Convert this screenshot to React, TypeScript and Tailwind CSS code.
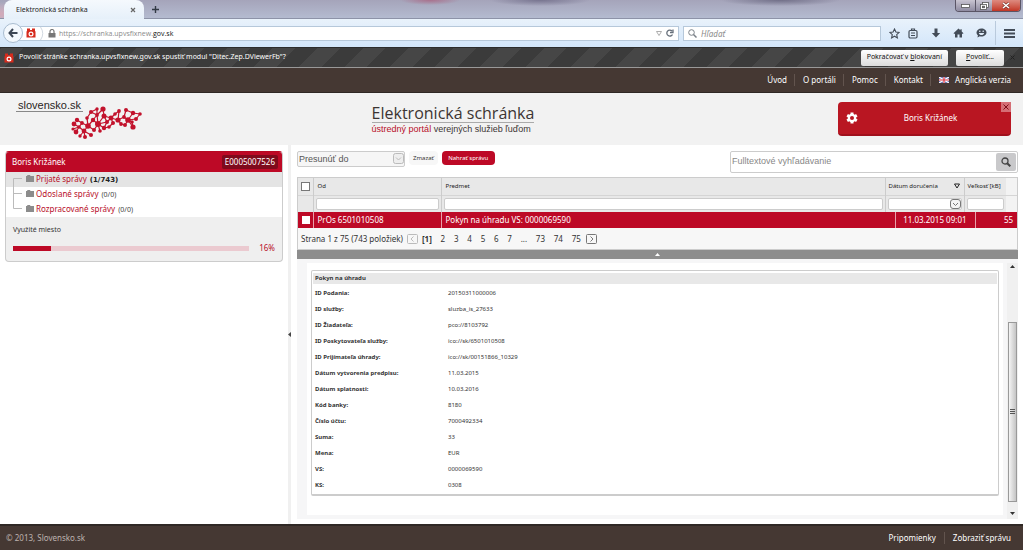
import React from 'react';

const NAV_LINKS = ['Úvod', 'O portáli', 'Pomoc', 'Kontakt'];

const FOLDERS = [
  { name: 'Prijaté správy', count: '(1/743)', active: true },
  { name: 'Odoslané správy', count: '(0/0)', active: false },
  { name: 'Rozpracované správy', count: '(0/0)', active: false },
];

const DETAILS = [
  ['ID Podania:', '20150311000006'],
  ['ID služby:', 'sluzba_is_27633'],
  ['ID Žiadateľa:', 'pco://8103792'],
  ['ID Poskytovateľa služby:', 'ico://sk/6501010508'],
  ['ID Prijímateľa úhrady:', 'ico://sk/00151866_10329'],
  ['Dátum vytvorenia predpisu:', '11.03.2015'],
  ['Dátum splatnosti:', '10.03.2016'],
  ['Kód banky:', '8180'],
  ['Číslo účtu:', '7000492334'],
  ['Suma:', '33'],
  ['Mena:', 'EUR'],
  ['VS:', '0000069590'],
  ['KS:', '0308'],
];

// [x, y, radius] of the dots in the logo map
const DOTS = [
  [3, 18, 2.4], [5, 26, 2.4], [8, 21, 1.8], [2, 23, 1.6], [13, 25, 2.4], [14, 31, 2], [20, 29, 2], [6, 14, 2.2], [11, 17, 1.9],
  [17, 20, 2.8], [23, 24, 2], [16, 12, 1.8], [20, 6, 2], [22, 14, 2.2], [27, 18, 3], [26, 9, 1.9], [32, 3, 2.6],
  [33, 10, 2.5], [36, 16, 2], [33, 22, 2.2], [29, 25, 1.8], [38, 21, 1.8], [40, 12, 2.4], [44, 8, 1.8], [42, 17, 2],
  [47, 14, 2.6], [50, 18, 1.9], [53, 11, 1.9], [48, 5, 1.9], [55, 4, 2], [57, 14, 2.8], [62, 7, 2.2], [62, 21, 2.6],
  [65, 13, 2], [69, 8, 1.8], [61, 16, 1.8], [54, 19, 2], [26, 3, 1.7], [9, 30, 1.7],
];

const EDGES = [
  [0, 2], [1, 2], [3, 2], [2, 4], [4, 5], [4, 6], [7, 8], [8, 9], [2, 8], [4, 9], [9, 10], [9, 11], [9, 13], [11, 12], [12, 15],
  [13, 14], [13, 15], [14, 15], [14, 17], [14, 19], [14, 18], [14, 20], [10, 14], [15, 16], [16, 17], [17, 18], [18, 19], [18, 22],
  [19, 21], [17, 22], [22, 23], [22, 24], [22, 25], [24, 21], [25, 26], [25, 27], [25, 28], [27, 29], [27, 30], [30, 31], [30, 32],
  [30, 33], [33, 34], [31, 34], [30, 35], [35, 32], [26, 36], [30, 36], [15, 37], [12, 37], [4, 38], [31, 29], [23, 28],
];

const SlovakiaLogo = () => (
  <svg viewBox="0 0 72 33" className="h-[33px] w-[72px]" aria-hidden="true">
    <g stroke="#c2122c" strokeWidth="1.2">
      {EDGES.map(([a, b]) => (
        <line key={`${a}-${b}`} x1={DOTS[a][0]} y1={DOTS[a][1]} x2={DOTS[b][0]} y2={DOTS[b][1]} />
      ))}
    </g>
    <g fill="#c2122c">
      {DOTS.map(([x, y, r]) => (
        <circle key={`${x}-${y}`} cx={x} cy={y} r={r} />
      ))}
    </g>
  </svg>
);

const BlockIcon = ({ className = '' }: { className?: string }) => (
  <svg viewBox="0 0 10 10" className={className} aria-hidden="true">
    <path d="M1 .5h3v1.500h2V.5h3v2.700h.5V9.500H.5V3.200H1z" fill="#d62b1d" />
    <circle cx="5" cy="6" r="2.500" fill="#fff" />
    <circle cx="5" cy="6" r="1.300" fill="#d62b1d" />
  </svg>
);

const BrowserTabs = () => (
  <div className="flex h-[19px] items-stretch justify-between border-b border-[#8d93a8] bg-[radial-gradient(30px_5px_at_430px_0px,#a9708c,transparent),radial-gradient(50px_6px_at_540px_0px,#77748f,transparent),radial-gradient(60px_6px_at_780px_0px,#716f88,transparent),radial-gradient(30px_12px_at_0px_14px,#d3a9b8,transparent),linear-gradient(#a5a4ba,#b4bbd0)]">
    <div className="flex items-stretch">
      <div className="-mb-px ml-1 flex w-[140px] items-center justify-between rounded-t-lg bg-linear-to-b from-[#f5f9fd] to-[#e6f0fa] pr-2 pl-3 text-[7px] leading-none text-[#1d1d1d]">
        <span>Elektronická schránka</span>
        <button aria-label="Zavrieť kartu">
          <svg viewBox="0 0 6 6" className="size-[6px]" stroke="#666" strokeWidth="1.2">
            <path d="M1 1l4 4M5 1L1 5" />
          </svg>
        </button>
      </div>
      <button aria-label="Nová karta" className="ml-2">
        <svg viewBox="0 0 7 7" className="size-[7px]" stroke="#333a45" strokeWidth="1.4">
          <path d="M3.500 0v7M0 3.500h7" />
        </svg>
      </button>
    </div>
    <div className="mr-0.5 flex h-3 overflow-hidden rounded-b border border-t-0 border-[#5a5566]">
      <button aria-label="Minimalizovať" className="flex w-5 items-center justify-center border-r border-[#5a5566] bg-linear-to-b from-[#c9c5d2] to-[#8f8ba1]">
        <svg viewBox="0 0 9 4" className="h-1 w-[9px]">
          <rect x="0.500" y="0.500" width="8" height="3" fill="#fff" stroke="#555" strokeWidth="0.8" />
        </svg>
      </button>
      <button aria-label="Obnoviť" className="flex w-4 items-center justify-center bg-linear-to-b from-[#c9c5d2] to-[#8f8ba1]">
        <svg viewBox="0 0 9 8" className="h-2 w-[9px]" fill="#fff" stroke="#555" strokeWidth="0.800">
          <rect x="2.500" y="0.500" width="6" height="5" />
          <rect x="0.500" y="2.500" width="6" height="5" />
          <rect x="2.500" y="4.200" width="2" height="1.500" fill="#777" />
        </svg>
      </button>
      <button aria-label="Zavrieť" className="flex w-7 items-center justify-center bg-linear-to-b from-[#dd8a80] to-[#c23424]">
        <svg viewBox="0 0 8 7" className="h-[7px] w-2">
          <path d="M1 1l6 5M7 1L1 6" stroke="#6b2a24" strokeWidth="2.600" />
          <path d="M1 1l6 5M7 1L1 6" stroke="#fff" strokeWidth="1.600" />
        </svg>
      </button>
    </div>
  </div>
);

const BrowserToolbar = () => (
  <div className="flex h-7 items-center bg-linear-to-b from-[#e9f2fb] to-[#d3e6fa] pl-[3px]">
    <button aria-label="Späť" className="z-10 flex size-5 items-center justify-center rounded-full border border-[#a9bccf] bg-[#f3f8fd]">
      <svg viewBox="0 0 10 10" className="size-[10px]" fill="none" stroke="#3c4654" strokeWidth="2">
        <path d="M5 1L1.500 5L5 9M1.500 5H9.500" />
      </svg>
    </button>
    <div className="-ml-1 flex h-[15px] grow items-center border border-[#b6c8da] bg-white pl-1.5">
      <BlockIcon className="size-[10px]" />
      <svg viewBox="0 0 4 13" className="ml-1 h-[13px] w-1" fill="none" stroke="#c5ced8" strokeWidth="0.800">
        <path d="M.5 0Q5 6.500 .5 13" />
      </svg>
      <svg viewBox="0 0 8 9" className="ml-1 h-[9px] w-2" aria-hidden="true">
        <rect x="0.500" y="4" width="7" height="4.500" fill="#777" />
        <path d="M2 4V2.500a2 2 0 0 1 4 0V4" fill="none" stroke="#777" strokeWidth="1.200" />
      </svg>
      <span className="ml-[3px] grow font-['Open_Sans',sans-serif] text-[7px] leading-none text-[#8b8b8b]">
        https://schranka.upvsfixnew.<span className="text-[#111]">gov.sk</span>
      </span>
      <svg viewBox="0 0 6 5" className="h-[5px] w-[6px]" fill="none" stroke="#999" strokeWidth="0.800">
        <path d="M.5.500h5L3 4.500z" />
      </svg>
      <button aria-label="Obnoviť stránku" className="mr-1 ml-1">
        <svg viewBox="0 0 8 8" className="size-2" fill="none" stroke="#666f7a" strokeWidth="1.300">
          <path d="M6.500 5.500A3 3 0 1 1 6 2M7 .5V3.500H4" />
        </svg>
      </button>
    </div>
    <label className="ml-1 flex h-[15px] w-[198px] items-center gap-1 border border-[#b6c8da] bg-white px-1">
      <svg viewBox="0 0 9 9" className="size-[9px] shrink-0" fill="none" stroke="#7a8087" strokeWidth="1">
        <circle cx="3.500" cy="3.500" r="2.800" />
        <path d="M5.500 5.500L8.500 8.500" strokeWidth="1.500" />
      </svg>
      <input aria-label="Hľadať" placeholder="Hľadať" className="w-full text-[8px] leading-none italic outline-none placeholder:text-[#8a8a8a]" />
    </label>
    <div className="ml-2 flex items-center gap-3 pr-2 text-[#434c58]">
      <svg viewBox="0 0 11 11" className="size-[11px]" fill="none" stroke="currentColor" strokeWidth="1.100">
        <path d="M5.500 1l1.400 3 3.200.4-2.400 2.200.7 3.300-2.900-1.700-2.900 1.700.7-3.300L.9 4.400 4.100 4z" />
      </svg>
      <svg viewBox="0 0 10 11" className="-ml-1 h-[11px] w-[10px]" fill="none" stroke="currentColor" strokeWidth="1.200">
        <rect x="1" y="2.500" width="8" height="7.500" rx="1.200" />
        <path d="M3.500 2.500V1h3v1.500M3 5h4M3 7.500h4" />
      </svg>
      <svg viewBox="0 0 10 10" className="ml-px size-[10px]" fill="currentColor">
        <path d="M3.500.500h3V5H9.200L5 9.500.8 5h2.700z" />
      </svg>
      <svg viewBox="0 0 11 10" className="h-[10px] w-[11px]" fill="currentColor">
        <path d="M5.500.500L.5 5.200l.8.800.7-.6v4.100h2.500V6.500h2v3H9V5.400l.7.600.8-.8L8.700 3.500V1.300H7.400v1z" />
      </svg>
      <svg viewBox="0 0 11 10" className="h-[10px] w-[11px]">
        <path d="M5.500.500c2.800 0 5 1.700 5 4s-2.200 4-5 4c-.6 0-1.200-.1-1.700-.2L1.500 9.500l.4-2.200C1 6.600.5 5.600.5 4.500c0-2.300 2.200-4 5-4z" fill="currentColor" />
        <circle cx="3.800" cy="3.300" r=".8" fill="#dfecf9" />
        <circle cx="7.200" cy="3.300" r=".8" fill="#dfecf9" />
        <path d="M2.800 5h5.400C7.800 6.500 6.800 7 5.500 7S3.200 6.500 2.800 5z" fill="#dfecf9" />
      </svg>
      <button aria-label="Ponuka" className="-ml-1 flex h-6 items-center border-l border-[#b9cadc] pl-2">
        <svg viewBox="0 0 11 9" className="h-[9px] w-[11px]" fill="currentColor">
          <path d="M0 0h11v2H0zM0 3.500h11v2H0zM0 7h11v2H0z" />
        </svg>
      </button>
    </div>
  </div>
);

const PluginNotice = () => (
  <div className="flex h-[21px] items-center border-y border-[#2c2c2c] border-b-[#999] bg-[repeating-linear-gradient(-45deg,#3b3b3b_0px,#3b3b3b_16px,#464646_16px,#464646_32px)] pl-1 text-[7px] text-white">
    <BlockIcon className="size-[10px]" />
    <span className="ml-[5px] grow">Povoliť stránke schranka.upvsfixnew.gov.sk spustiť modul "Ditec.Zep.DViewerFb"?</span>
    <button className="h-4 rounded-xs bg-linear-to-b from-white to-[#dcdcdc] px-1.5 text-[#111]">
      Pokračovať v <u>b</u>lokovaní
    </button>
    <button className="ml-2 h-4 w-12 rounded-xs bg-linear-to-b from-white to-[#dcdcdc] text-[#111]">
      <u>P</u>ovoliť...
    </button>
    <button aria-label="Zavrieť upozornenie" className="mr-2 ml-1.5">
      <svg viewBox="0 0 5 5" className="size-[5px]" stroke="#222">
        <path d="M.5.500l4 4M4.500.500l-4 4" />
      </svg>
    </button>
  </div>
);

const PortalHeader = () => (
  <header>
    <nav className="flex h-[25px] items-center justify-end border-b border-[#2f2825] bg-[#453833] pr-3 text-[8px] text-white">
      {NAV_LINKS.map((link) => (
        <a key={link} href="#" className="border-r border-[#62544e] pr-[7px] pl-2 leading-3">
          {link}
        </a>
      ))}
      <a href="#" className="flex items-center gap-1.5 pl-2 leading-3">
        <svg viewBox="0 0 10 6" className="h-[6px] w-[10px]" aria-hidden="true">
          <rect width="10" height="6" fill="#5a6fb5" />
          <path d="M0 0l10 6M10 0L0 6" stroke="#fff" strokeWidth="1.200" />
          <path d="M5 0v6M0 3h10" stroke="#fff" strokeWidth="2.200" />
          <path d="M5 0v6M0 3h10" stroke="#d5303e" strokeWidth="1.200" />
        </svg>
        Anglická verzia
      </a>
    </nav>
    <div className="grid h-[52px] grid-cols-[1fr_auto_1fr] bg-[#f2f2f2]">
      <a href="#" className="flex pt-[7px] pl-4 font-['Liberation_Sans',sans-serif]">
        <span className="h-3 border-b border-[#888] px-0.5 text-[11px] leading-[11px] text-[#2b2624]">slovensko.sk</span>
        <span className="-ml-3 pt-1.5">
          <SlovakiaLogo />
        </span>
      </a>
      <div className="-ml-[117px] pt-[11px]">
        <h1 className="border-b border-[#aaa] font-['Open_Sans',sans-serif] text-[16px] leading-[18px] text-[#3c3532]">Elektronická schránka</h1>
        <p className="mt-px font-['Liberation_Sans',sans-serif] text-[9px] leading-[10px] text-[#3c3532]">
          <span className="text-[#b80e29]">ústredný portál</span> verejných služieb ľuďom
        </p>
      </div>
      <div className="flex justify-end pt-[9px] pr-3">
        <div className="relative flex h-[34px] w-[173px] items-center rounded border-b-2 border-[#a0101c] bg-[#b91622] text-[8px] text-white">
          <svg viewBox="0 0 12 12" className="ml-2 size-3" aria-hidden="true">
            <g stroke="#fff" strokeWidth="3">
              <path d="M6 .5v11M1.200 3.300l9.600 5.400M1.200 8.700l9.600-5.400" />
            </g>
            <circle cx="6" cy="6" r="4.300" fill="#fff" />
            <circle cx="6" cy="6" r="2" fill="#b91622" />
          </svg>
          <span className="grow pr-2 text-center">Boris Križánek</span>
          <button aria-label="Odhlásiť" className="absolute top-0 right-0 flex size-[10px] items-center justify-center bg-[#d56e75]">
            <svg viewBox="0 0 6 6" className="size-[6px]" stroke="#7c0d17" strokeWidth="1">
              <path d="M.5.500l5 5M5.500.500l-5 5" />
            </svg>
          </button>
        </div>
      </div>
    </div>
  </header>
);

const Sidebar = () => (
  <aside className="w-[288px] shrink-0 bg-white py-[6px] pr-[5px] pl-[5px]">
    <div className="overflow-hidden rounded border border-[#ccc] border-t-[#b80822] bg-[#efefef]">
      <div className="-mx-px flex h-5 items-center justify-between bg-[#bd0926] pr-[5px] pl-[7px] text-[8px] text-white">
        <span>Boris Križánek</span>
        <span className="rounded-xs bg-[#7f0a1c] px-[3px] leading-[14px]">E0005007526</span>
      </div>
      <ul className="bg-white text-[8px]">
        {FOLDERS.map((folder, i) => (
          <li key={folder.name} className={`flex h-[15px] items-center pl-[7px] ${folder.active ? 'bg-[#e4e4e4]' : ''}`}>
            <svg viewBox="0 0 9 15" className="h-[15px] w-[9px]" fill="none" stroke="#bbb">
              {i === 0 && <path d="M9 6.500H.5V15" />}
              {i === 1 && <path d="M.5 0v15M.5 6.500H9" />}
              {i === 2 && <path d="M.5 0v6.500H9" />}
            </svg>
            <svg viewBox="0 0 8 7" className="mr-0.5 mb-0.5 ml-1 h-[7px] w-2" fill="#8c8c8c">
              <path d="M0 1h1l.5-1H4l.5 1H8v6H0z" />
            </svg>
            <span className="flex items-baseline gap-[3px]">
              <a href="#" className="text-[#b80e29]">
                {folder.name}
              </a>
              <span className={folder.active ? "font-['DejaVu_Sans',sans-serif] text-[7px] font-bold text-[#222]" : 'text-[7px] text-[#444]'}>
                {folder.count}
              </span>
            </span>
          </li>
        ))}
      </ul>
      <div className="h-[44px] px-[7px] pt-[7px] text-[7px] leading-3 text-[#333]">
        <div>Využité miesto</div>
        <div className="mt-1.5 flex items-center text-[8px]">
          <div className="h-[5px] grow bg-[#ebcad0]">
            <div className="h-full bg-[#bd0926]" style={{ width: '16%' }} />
          </div>
          <span className="w-[26px] text-right text-[#b80e29]">16%</span>
        </div>
      </div>
    </div>
  </aside>
);

const Toolbar = () => (
  <div className="flex h-8 items-start pt-[6px] font-['Liberation_Sans',sans-serif]">
    <div className="relative">
      <select aria-label="Presunúť do" className="block h-4 w-[108px] appearance-none rounded-xs border border-[#ccc] bg-[#f6f6f6] pl-px text-[9px] leading-3 text-[#555]">
        <option>Presunúť do</option>
      </select>
      <svg viewBox="0 0 11 11" className="pointer-events-none absolute top-[2px] right-px size-[11px]" fill="none" stroke="#bbb">
        <rect x="0.500" y="0.500" width="10" height="10" rx="2" fill="#eee" />
        <path d="M3 4.500L5.500 7L8 4.500" />
      </svg>
    </div>
    <button className="ml-1 h-[14px] rounded bg-[#f7f7f7] px-1 font-['Noto_Sans',sans-serif] text-[6px] text-[#333]">Zmazať</button>
    <button className="ml-1 h-[14px] w-[53px] rounded bg-[#bd0926] font-['Noto_Sans',sans-serif] text-[6px] text-white">Nahrať správu</button>
    <label className="ml-auto flex h-[22px] w-[288px] items-center rounded-xs border border-[#ccc] bg-white pr-px">
      <input aria-label="Fulltextové vyhľadávanie" placeholder="Fulltextové vyhľadávanie" className="grow pl-px text-[9px] outline-none placeholder:text-[#888]" />
      <button aria-label="Hľadať" className="flex h-[18px] w-5 items-center justify-center rounded-xs bg-[#c9c9cb]">
        <svg viewBox="0 0 10 10" className="size-[10px]" fill="none" stroke="#444">
          <circle cx="4" cy="4" r="3" strokeWidth="1.300" />
          <path d="M6.200 6.200L9.300 9.300" strokeWidth="2" />
        </svg>
      </button>
    </label>
  </div>
);

const MessageTable = () => (
  <div className="border border-[#ccc] bg-[#f7f7f7]">
    <table className="w-full table-fixed border-collapse text-left">
      <colgroup>
        <col className="w-[15px]" />
        <col className="w-[128px]" />
        <col />
        <col className="w-[79px]" />
        <col className="w-[42px]" />
        <col className="w-[11px]" />
      </colgroup>
      <thead className="bg-[#e8e8e8] text-[6px] text-[#222]">
        <tr className="h-[17px]">
          <th className="border-r border-[#ccc] px-[3px]">
            <input type="checkbox" aria-label="Vybrať všetko" className="block size-[9px] appearance-none border border-[#777] bg-white" />
          </th>
          <th className="border-r border-[#ccc] pl-1 font-normal">Od</th>
          <th className="border-r border-[#ccc] pl-1 font-normal">Predmet</th>
          <th className="border-r border-[#ccc] pl-[3px] font-normal">
            <span className="flex items-center justify-between pr-1">
              Dátum doručenia
              <svg viewBox="0 0 6 6" className="size-[6px]" fill="none" stroke="#222">
                <path d="M.5 1h5L3 5z" />
              </svg>
            </span>
          </th>
          <th className="pl-[3px] font-normal whitespace-nowrap">Veľkosť [kB]</th>
          <th className="bg-[#f3f3f3]" />
        </tr>
        <tr className="h-[17px] border-t border-[#d5d5d5]">
          <td className="border-r border-[#ccc]" />
          <td className="border-r border-[#ccc] px-0.5">
            <input aria-label="Filter Od" className="block h-3 w-full rounded-xs border border-[#ccc] bg-white" />
          </td>
          <td className="border-r border-[#ccc] px-0.5">
            <input aria-label="Filter Predmet" className="block h-3 w-full rounded-xs border border-[#ccc] bg-white" />
          </td>
          <td className="border-r border-[#ccc] px-0.5">
            <span className="flex h-3 items-center rounded-xs border border-[#ccc] bg-white">
              <input aria-label="Filter Dátum doručenia" className="w-0 grow" />
              <button aria-label="Vybrať dátum">
                <svg viewBox="0 0 11 10" className="block h-[10px] w-[11px]" fill="none" stroke="#777">
                  <rect x="0.500" y="0.500" width="10" height="9" rx="2.500" fill="#f4f4f4" />
                  <path d="M3 4L5.500 6.500L8 4" />
                </svg>
              </button>
            </span>
          </td>
          <td className="px-0.5">
            <input aria-label="Filter Veľkosť" className="block h-3 w-full rounded-xs border border-[#ccc] bg-white" />
          </td>
          <td className="bg-[#f3f3f3]" />
        </tr>
      </thead>
    </table>
    <table className="w-full table-fixed border-collapse text-left">
      <colgroup>
        <col className="w-[15px]" />
        <col className="w-[128px]" />
        <col />
        <col className="w-[80px]" />
        <col className="w-[42px]" />
      </colgroup>
      <tbody className="bg-[#bd0926] text-[8px] text-white">
        <tr className="h-4">
          <td className="border-r border-[#e8a0ab] px-1">
            <input type="checkbox" aria-label="Vybrať správu" className="block size-2 appearance-none bg-white" />
          </td>
          <td className="border-r border-[#e8a0ab] pl-1">PrOs 6501010508</td>
          <td className="border-r border-[#e8a0ab] pl-1">Pokyn na úhradu VS: 0000069590</td>
          <td className="border-r border-[#e8a0ab] pr-2 text-right">11.03.2015 09:01</td>
          <td className="pr-1 text-right">55</td>
        </tr>
      </tbody>
    </table>
    <div className="flex h-[21px] items-center pl-[3px] text-[8px] text-[#333]">
      <span>Strana 1 z 75 (743 položiek)</span>
      <button aria-label="Predchádzajúca strana" className="ml-1">
        <svg viewBox="0 0 11 10" className="block h-[10px] w-[11px]" fill="none" stroke="#bbb">
          <rect x="0.500" y="0.500" width="10" height="9" rx="1" />
          <path d="M6.500 2.500L4 5L6.500 7.500" />
        </svg>
      </button>
      <div className="flex w-[168px] items-center justify-between pr-[5px] pl-1">
        <span className="font-bold">[1]</span>
        {['2', '3', '4', '5', '6', '7', '…', '73', '74', '75'].map((page) =>
          page === '…' ? <span key={page}>...</span> : <a key={page} href="#">{page}</a>
        )}
      </div>
      <button aria-label="Nasledujúca strana">
        <svg viewBox="0 0 11 10" className="block h-[10px] w-[11px]" fill="none" stroke="#777">
          <rect x="0.500" y="0.500" width="10" height="9" rx="1" />
          <path d="M4.500 2.500L7 5L4.500 7.500" />
        </svg>
      </button>
    </div>
  </div>
);

const MessageDetail = () => (
  <div className="flex grow bg-[#f6f6f7] pt-1">
    <div className="mb-1 ml-[10px] grow bg-white px-1 pt-[7px]">
      <section className="rounded-xs border border-b-2 border-[#ccc] px-px pt-0.5 pb-px text-[6px] text-[#333]">
        <h2 className="mb-px h-[11px] bg-[#e8e8e8] pl-0.5 leading-[11px] font-bold">Pokyn na úhradu</h2>
        <dl>
          {DETAILS.map(([label, value]) => (
            <div key={label} className="flex h-4 items-center pl-0.5">
              <dt className="w-[133px] font-bold">{label}</dt>
              <dd>{value}</dd>
            </div>
          ))}
        </dl>
      </section>
    </div>
    <div className="ml-1 flex w-[11px] flex-col items-center bg-[#f0f0f0]">
      <svg viewBox="0 0 5 3" className="my-0.5 h-[3px] w-[5px]" fill="#333">
        <path d="M2.500 0L5 3H0z" />
      </svg>
      <div className="mt-auto mb-[10px] flex h-[180px] w-[9px] items-center justify-center border border-[#999] bg-linear-to-r from-[#f4f4f4] to-[#c4c4c4]">
        <svg viewBox="0 0 5 6" className="h-[6px] w-[5px]" stroke="#555">
          <path d="M0 .5h5M0 2.500h5M0 4.500h5" />
        </svg>
      </div>
      <svg viewBox="0 0 5 3" className="mb-1 h-[3px] w-[5px]" fill="#333">
        <path d="M0 0h5L2.500 3z" />
      </svg>
    </div>
  </div>
);

export default function App() {
  return (
    <div className="flex min-h-screen flex-col bg-white font-['Noto_Sans',sans-serif]">
      <BrowserTabs />
      <BrowserToolbar />
      <PluginNotice />
      <PortalHeader />
      <main className="flex grow items-stretch">
        <Sidebar />
        <div className="flex w-1 items-center bg-[#f0f0f0]">
          <svg viewBox="0 0 3 5" className="h-[5px] w-[3px]" fill="#444">
            <path d="M3 0v5L0 2.500z" />
          </svg>
        </div>
        <div className="flex grow flex-col pr-[5px] pb-[5px] pl-1.5">
          <Toolbar />
          <MessageTable />
          <button aria-label="Zbaliť zoznam" className="flex h-[9px] items-center justify-center bg-[#8d8d8d]">
            <svg viewBox="0 0 5 3" className="h-[3px] w-[5px]" fill="#fff">
              <path d="M2.500 0L5 3H0z" />
            </svg>
          </button>
          <MessageDetail />
        </div>
      </main>
      <footer className="flex h-[26px] items-center border-t-2 border-[#2f2825] bg-[#453833] pr-3 pl-1.5 text-[8px] text-white">
        <span className="grow text-[#bdb3af]">© 2013, Slovensko.sk</span>
        <a href="#" className="border-r border-[#62544e] pr-2 leading-3">
          Pripomienky
        </a>
        <a href="#" className="pl-2 leading-3">
          Zobraziť správu
        </a>
      </footer>
    </div>
  );
}
